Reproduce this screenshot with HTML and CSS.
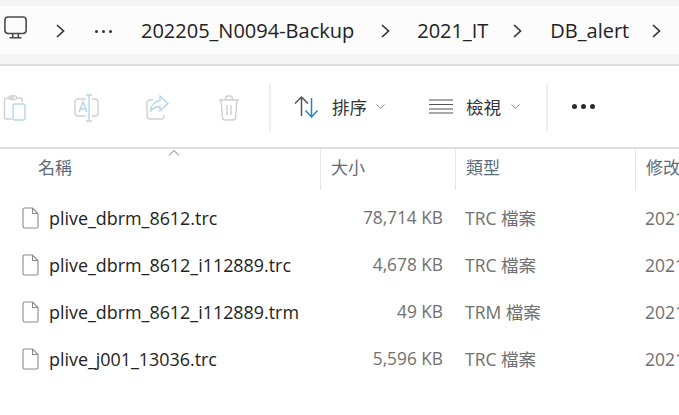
FILE: index.html
```html
<!DOCTYPE html>
<html lang="zh-Hant">
<head>
<meta charset="utf-8">
<title>DB_alert</title>
<link rel="stylesheet" href="styles.css">
</head>
<body>
<div class="top">
  <nav class="crumbs">
    <svg class="i-pc" width="24" height="24" viewBox="0 0 26 26" fill="none" stroke="#4a4a4a" stroke-width="1.7"><rect x="1" y="1" width="23" height="18" rx="3.5"/><path d="M9.5 19.5v3.5M15.5 19.5v3.5M6 23.6h13"/></svg>
    <svg class="chev c1" width="9" height="14" viewBox="0 0 9 14" fill="none" stroke="#333" stroke-width="1.7"><path d="M1 1l6.5 6L1 13"/></svg>
    <span class="dots"><i></i><i></i><i></i></span>
    <span class="crumb t1">202205_N0094-Backup</span>
    <svg class="chev c2" width="9" height="14" viewBox="0 0 9 14" fill="none" stroke="#333" stroke-width="1.7"><path d="M1 1l6.5 6L1 13"/></svg>
    <span class="crumb t2">2021_IT</span>
    <svg class="chev c3" width="9" height="14" viewBox="0 0 9 14" fill="none" stroke="#333" stroke-width="1.7"><path d="M1 1l6.5 6L1 13"/></svg>
    <span class="crumb t3">DB_alert</span>
    <svg class="chev c4" width="9" height="14" viewBox="0 0 9 14" fill="none" stroke="#333" stroke-width="1.7"><path d="M1 1l6.5 6L1 13"/></svg>
  </nav>
</div>
<div class="toolbar">
  <svg class="t-paste" width="24" height="26" viewBox="0 0 24 26" fill="none" stroke-width="1.4"><path d="M11 3H3.5A2 2 0 0 0 1.500 5v17a2 2 0 0 0 2 2H9" stroke="#cfcfcf"/><path d="M15 3h2a2 2 0 0 1 2 2v2" stroke="#cfcfcf"/><rect x="6" y="1" width="8" height="3.500" rx="1.700" stroke="#cfcfcf"/><rect x="10" y="9" width="12" height="16" rx="2" stroke="#b5d6ee"/></svg>
  <svg class="t-rename" width="25" height="28" viewBox="0 0 25 28" fill="none" stroke-width="1.4"><path d="M12 5H4a3 3 0 0 0-3 3v11a3 3 0 0 0 3 3h8M18 5h3a3 3 0 0 1 3 3v11a3 3 0 0 1-3 3h-3" stroke="#cfcfcf"/><path d="M15 1v26M12 1h6M12 27h6" stroke="#b5d6ee"/><path d="M5 18l4-10 4 10M6.500 15h5" stroke="#b5d6ee"/></svg>
  <svg class="t-share" width="23" height="25" viewBox="0 0 23 25" fill="none" stroke-width="1.4"><path d="M7 5H4a3 3 0 0 0-3 3v13a3 3 0 0 0 3 3h12a3 3 0 0 0 2-2v-2" stroke="#cfcfcf"/><path d="M14 1l8 7.500-8 7.500v-4.500c-4 0-7 1-9.500 5 .5-6 4-10 9.500-11z" stroke="#b5d6ee"/></svg>
  <svg class="t-trash" width="22" height="26" viewBox="0 0 22 26" fill="none" stroke="#cfcfcf" stroke-width="1.4"><path d="M1 5h20M7.500 5V3.500A2.500 2.500 0 0 1 10 1h2a2.500 2.500 0 0 1 2.500 2.500V5M3 5l1.500 17.500A2.500 2.500 0 0 0 7 25h8a2.500 2.500 0 0 0 2.500-2.500L19 5M9 10v10M13 10v10"/></svg>
  <span class="sep s1"></span>
  <svg class="t-sort" width="25" height="22" viewBox="0 0 25 22" fill="none" stroke-width="1.500"><path d="M7.500 20V1M1 7.500L7.500 1 14 7.500" stroke="#555"/><path d="M17.500 2v19M11.500 14.500l6 6.500 6-6.500" stroke="#2a82c9"/></svg>
  <span class="label l1">排序</span>
  <svg class="caret k1" width="9" height="6" viewBox="0 0 9 6" fill="none" stroke="#8a8a8a" stroke-width="1"><path d="M.5.500l4 4 4-4"/></svg>
  <svg class="t-view" width="24" height="15" viewBox="0 0 24 15" fill="none" stroke="#555" stroke-width="1.200"><path d="M0 1h24M0 5.500h24M0 10h24M0 14h24"/></svg>
  <span class="label l2">檢視</span>
  <svg class="caret k2" width="9" height="6" viewBox="0 0 9 6" fill="none" stroke="#8a8a8a" stroke-width="1"><path d="M.5.500l4 4 4-4"/></svg>
  <span class="sep s2"></span>
  <span class="more"><i></i><i></i><i></i></span>
</div>
<div class="header">
  <svg class="sort-up" width="12" height="6" viewBox="0 0 12 6" fill="none" stroke="#777" stroke-width="1"><path d="M1 5.500l5-5 5 5"/></svg>
  <div class="hc h-name">名稱</div>
  <div class="hc h-size">大小</div>
  <div class="hc h-type">類型</div>
  <div class="hc h-date">修改</div>
</div>
<div class="rows">
  <div class="row">
    <svg class="file" width="17" height="22" viewBox="0 0 17 22" fill="#fff" stroke="#8a8a8a" stroke-width="1.100"><path d="M1 2.500A1.500 1.500 0 0 1 2.500 1H10.500L16 6.500V19.500A1.500 1.500 0 0 1 14.500 21H2.500A1.500 1.500 0 0 1 1 19.500zM10.500 1V6.500H16"/></svg>
    <span class="name">plive_dbrm_8612.trc</span><span class="size">78,714 KB</span><span class="type">TRC 檔案</span><span class="date">2021</span>
  </div>
  <div class="row">
    <svg class="file" width="17" height="22" viewBox="0 0 17 22" fill="#fff" stroke="#8a8a8a" stroke-width="1.100"><path d="M1 2.500A1.500 1.500 0 0 1 2.500 1H10.500L16 6.500V19.500A1.500 1.500 0 0 1 14.500 21H2.500A1.500 1.500 0 0 1 1 19.500zM10.500 1V6.500H16"/></svg>
    <span class="name">plive_dbrm_8612_i112889.trc</span><span class="size">4,678 KB</span><span class="type">TRC 檔案</span><span class="date">2021</span>
  </div>
  <div class="row">
    <svg class="file" width="17" height="22" viewBox="0 0 17 22" fill="#fff" stroke="#8a8a8a" stroke-width="1.100"><path d="M1 2.500A1.500 1.500 0 0 1 2.500 1H10.500L16 6.500V19.500A1.500 1.500 0 0 1 14.500 21H2.500A1.500 1.500 0 0 1 1 19.500zM10.500 1V6.500H16"/></svg>
    <span class="name">plive_dbrm_8612_i112889.trm</span><span class="size">49 KB</span><span class="type">TRM 檔案</span><span class="date">2021</span>
  </div>
  <div class="row">
    <svg class="file" width="17" height="22" viewBox="0 0 17 22" fill="#fff" stroke="#8a8a8a" stroke-width="1.100"><path d="M1 2.500A1.500 1.500 0 0 1 2.500 1H10.500L16 6.500V19.500A1.500 1.500 0 0 1 14.500 21H2.500A1.500 1.500 0 0 1 1 19.500zM10.500 1V6.500H16"/></svg>
    <span class="name">plive_j001_13036.trc</span><span class="size">5,596 KB</span><span class="type">TRC 檔案</span><span class="date">2021</span>
  </div>
</div>
</body>
</html>
```
FILE: styles.css
```css
html, body { margin: 0; padding: 0; }
body {
  width: 679px;
  height: 415px;
  overflow: hidden;
  background: #fff;
  font-family: "Open Sans", "Noto Sans CJK TC", sans-serif;
  color: #1f1f1f;
}
svg { display: block; flex: none; }

.top {
  box-sizing: border-box;
  padding: 6px 0 10px;
  background: #f5f5f5;
  border-bottom: 2px solid #dcdcdc;
  height: 66px;
}
.crumbs {
  height: 48px;
  display: flex;
  align-items: center;
  background: #fcfcfc;
  padding-left: 4px;
}
.crumb { font-size: 20px; white-space: nowrap; color: #222; }
.chev { margin-top: 2px; }
.i-pc { margin-top: -4px; }
.c1 { margin-left: 28px; }
.dots { display: flex; gap: 4px; margin-left: 30px; margin-top: 2px; }
.dots i { width: 3px; height: 3px; border-radius: 50%; background: #333; }
.t1 { margin-left: 29px; }
.c2 { margin-left: 27px; }
.t2 { margin-left: 27px; }
.c3 { margin-left: 25px; }
.t3 { margin-left: 28px; }
.c4 { margin-left: 23px; }

.toolbar {
  height: 81px;
  display: flex;
  align-items: center;
  padding-left: 3px;
}
.t-paste { margin-top: 2px; }
.t-rename { margin-left: 47px; margin-top: 2px; }
.t-share { margin-left: 47px; margin-top: 2px; }
.t-trash { margin-left: 49px; margin-top: 2px; }
.sep { width: 2px; height: 47px; background: #efefef; margin-top: 1px; }
.s1 { margin-left: 29px; }
.t-sort { margin-left: 23px; }
.label { font-size: 17.500px; color: #333; }
.l1 { margin-left: 13px; }
.k1 { margin-left: 9px; }
.t-view { margin-left: 44px; }
.l2 { margin-left: 13px; }
.k2 { margin-left: 10px; }
.s2 { margin-left: 26px; }
.more { display: flex; gap: 4px; margin-left: 24px; }
.more i { width: 5px; height: 5px; border-radius: 50%; background: #2b2b2b; }

.header {
  position: relative;
  height: 41px;
  display: grid;
  grid-template-columns: 321px 135px 180px 44px;
  border-top: 2px solid #dedede;
}
.sort-up { position: absolute; left: 168px; top: 1px; }
.hc {
  font-size: 17px;
  color: #5c6b7a;
  padding-top: 4px;
  line-height: 30px;
  border-right: 1px solid #e5e5e5;
  box-sizing: border-box;
  white-space: nowrap;
  overflow: hidden;
}
.h-name { padding-left: 38px; }
.h-size { padding-left: 10px; }
.h-type { padding-left: 10px; }
.h-date { padding-left: 10px; border-right: 0; }

.rows { padding-top: 4px; }
.row {
  height: 47px;
  display: grid;
  grid-template-columns: 49px 272px 122px 202px 34px;
  align-items: center;
  font-size: 17.900px;
  white-space: nowrap;
}
.file { margin-left: 22px; }
.name { color: #222; }
.size { color: #707070; text-align: right; font-size: 17.300px; }
.type { color: #707070; padding-left: 22px; font-size: 17.500px; }
.date { color: #707070; font-size: 17.500px; overflow: hidden; }
```
